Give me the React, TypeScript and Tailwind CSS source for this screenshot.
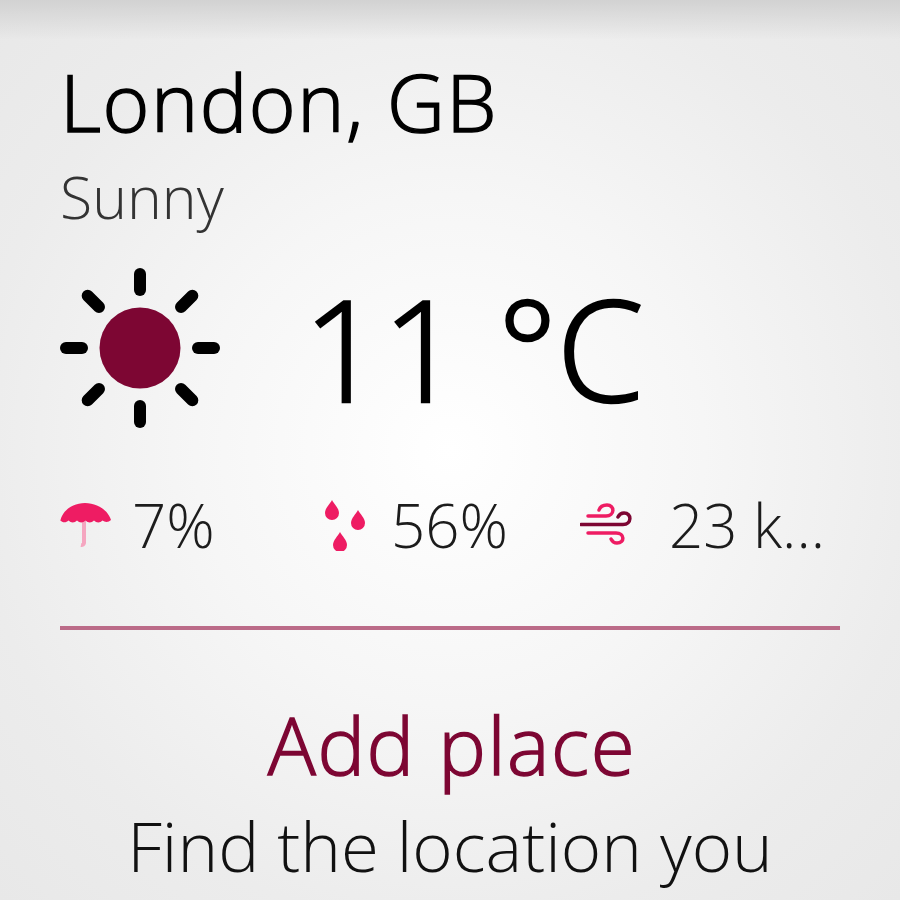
const font = { fontFamily: '"Open Sans", sans-serif' };

function Sun() {
  const rays = [0, 45, 90, 135, 180, 225, 270, 315];
  return (
    <svg width="160" height="160" viewBox="0 0 160 160" className="shrink-0">
      {rays.map((a) => (
        <line
          key={a}
          x1="80"
          y1="6"
          x2="80"
          y2="22"
          stroke="#000"
          strokeWidth="12"
          strokeLinecap="round"
          transform={`rotate(${a} 80 80)`}
        />
      ))}
      <circle cx="80" cy="80" r="40.500" fill="#7d0633" />
    </svg>
  );
}

function Umbrella() {
  return (
    <svg width="52" height="48" viewBox="0 0 52 48" className="shrink-0">
      <path d="M24 16V42a2.500 2.500 0 0 1-3 2" fill="none" stroke="#f5a6c0" strokeWidth="4" />
      <path
        d="M0.500 19C3 9 13 2 25 2s23 7 26 17c-2.500 2.500-6 2.500-8.500 0.500-2.500 2.500-6 2.500-8.500 0-2.500 2.500-6 2.500-8.500 0-2.500 2.500-6 2.500-8.500 0-2.500 2.500-6 2.500-8.500 0-2.500 2.500-6 2.500-8.500-0.500z"
        fill="#ee1c63"
      />
    </svg>
  );
}

function Drops() {
  const drop = 'M0-10C2-6 7-2 7 3A7 7 0 0 1-7 3C-7-2-2-6 0-10z';
  return (
    <svg width="50" height="52" viewBox="0 0 50 52" className="shrink-0">
      <path d={drop} transform="translate(12 11)" fill="#ee1c63" />
      <path d={drop} transform="translate(38 21)" fill="#ee1c63" />
      <path d={drop} transform="translate(20 43)" fill="#ee1c63" />
    </svg>
  );
}

function Wind() {
  return (
    <svg width="54" height="44" viewBox="0 0 54 44" fill="none" strokeWidth="3.500" strokeLinecap="round" className="shrink-0">
      <path d="M8 13H26C35 13 35 2 27 2C23 2 20 4 19 7" stroke="#ee1c63" />
      <path d="M8 30H36C45 30 45 40 37 40C34 40 32 38 31 36" stroke="#ee1c63" />
      <path d="M1 21.500H43C52 21.500 52 10 44 10C41 10 39 12 38 14" stroke="#7d0633" />
    </svg>
  );
}

export default function App() {
  return (
    <div
      className="relative h-[900px] w-[900px] overflow-hidden bg-[radial-gradient(circle_at_50%_50%,#ffffff_0%,#f6f6f6_40%,#ececec_75%,#e8e8e8_100%)] text-black"
      style={font}
    >
      <div className="absolute inset-x-0 top-0 h-[40px] bg-gradient-to-b from-[#d2d2d2] to-transparent" />
      <div className="relative px-[60px] blur-[0.5px]">
        <h1 className="pt-[49px] text-[80px] leading-[104px] font-light tracking-[1.5px] [-webkit-text-stroke:1.5px_#000]">London, GB</h1>
        <p className="mt-[3px] text-[59px] leading-[80px] font-light text-[#333]">Sunny</p>
        <div className="mt-[32px] flex items-center">
          <Sun />
          <div className="ml-[83px] text-[140px] leading-[160px] font-light tracking-[-0.6px] [-webkit-text-stroke:2.500px_#000]">11 °C</div>
        </div>
        <div className="mt-[67px] flex h-[60px] items-center text-[60px] font-light text-[#1c1c1c]">
          <div className="flex w-[260px] items-center">
            <Umbrella />
            <span className="ml-[20px]">7%</span>
          </div>
          <div className="flex w-[260px] items-center">
            <Drops />
            <span className="ml-[21px]">56%</span>
          </div>
          <div className="flex items-center">
            <Wind />
            <span className="ml-[35px]">23 k...</span>
          </div>
        </div>
        <div className="mt-[71px] h-[4px] bg-[#bb6b88]" />
        <div className="mt-[60px] text-center">
          <div className="pl-[4px] text-[80px] leading-[108px] font-light tracking-[1.6px] text-[#7d0633] [-webkit-text-stroke:1.5px_#7d0633]">Add place</div>
          <div className="text-[69px] leading-[94px] font-light text-[#111]">Find the location you</div>
        </div>
      </div>
    </div>
  );
}
